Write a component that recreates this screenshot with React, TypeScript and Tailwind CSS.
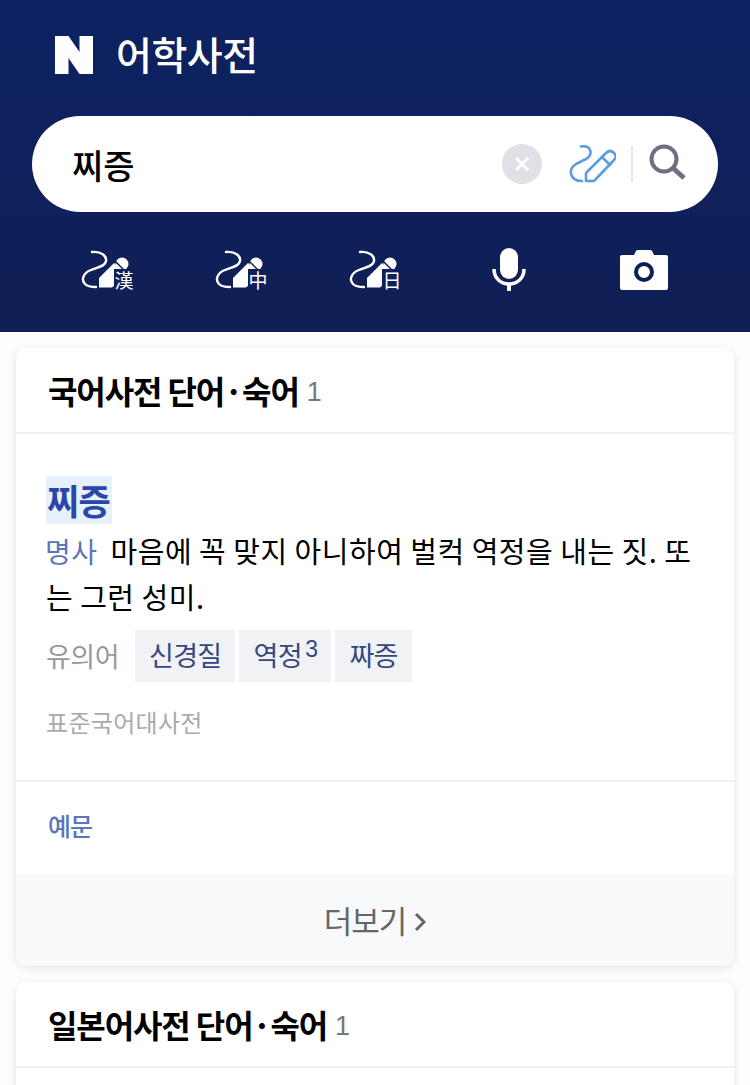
const FONT = "font-['Noto_Sans_CJK_KR','Noto_Sans',sans-serif]";

function HandwriteIcon({ label }: { label: string }) {
    return (
        <div className="relative w-[54px] h-[41px]">
            <svg width="54" height="41" viewBox="0 0 54 41" fill="none">
                <path d="M12 2 C 21 1 27 6 26 11 C 25 17 17 17 11 20 C 3 23 1 30 5 34 C 8 37 12 37 16 37" stroke="#fff" strokeWidth="2.4" strokeLinecap="round" />
                <path d="M19 37.5 V 28 L 34 13 L 46 25 L 32 37.5 Z" fill="#fff" />
                <circle cx="42" cy="14" r="6.5" fill="#fff" />
                <path d="M33.5 9.5 L 44 20" stroke="#0f1f58" strokeWidth="1.5" />
            </svg>
            <span className="absolute left-[34px] top-[19px] w-5 h-[22px] bg-[#0f1f58] text-white text-[19px] leading-[22px] text-center font-['Noto_Sans_CJK_KR',sans-serif]">
                {label}
            </span>
        </div>
    );
}

function CardHeader({ title }: { title: string }) {
    return (
        <div className="h-[86px] px-8 flex items-center border-b-2 border-[#f0f0f2]">
            <h2 className="text-[32px] font-bold text-black tracking-[-1.1px] leading-none">{title}</h2>
            <span className="ml-2 mt-1 text-[27px] text-[#777] leading-none font-['Liberation_Sans',sans-serif]">1</span>
        </div>
    );
}

export default function App() {
    return (
        <div className={`w-[750px] h-[1085px] overflow-hidden bg-[#fdfdfd] ${FONT}`}>
            {/* Search header */}
            <header className="h-[332px] px-8 bg-gradient-to-b from-[#0d2262] to-[#101f55]">
                <div className="h-[116px] pl-[23px] pb-[6px] flex items-center gap-[23px]">
                    <svg width="38" height="38" viewBox="0 0 38 38">
                        <path d="M0 0 H13.5 L24.5 16 V0 H38 V38 H24.5 L13.5 22 V38 H0 Z" fill="#fff" />
                    </svg>
                    <h1 className="mb-1 text-[39px] font-medium text-white tracking-[-0.5px] leading-none">어학사전</h1>
                </div>

                <div className="h-[96px] pl-10 pr-[32px] bg-white rounded-[48px] flex items-center">
                    <span className="flex-1 text-[34px] font-medium text-black">찌증</span>
                    <div className="w-10 h-10 rounded-full bg-[#dfe1e6] flex items-center justify-center">
                        <svg width="18" height="18" viewBox="0 0 18 18">
                            <path d="M3 3 L15 15 M15 3 L3 15" stroke="#fff" strokeWidth="3" />
                        </svg>
                    </div>
                    <svg className="ml-[26px]" width="48" height="38" viewBox="0 0 48 38" fill="none" stroke="#5f9be0" strokeWidth="2.6" strokeLinejoin="round" strokeLinecap="round">
                        <path d="M13 1.5 C 24 0 25 10 18 14 L 8 19 C 0 24 1 36 14 36" />
                        <path d="M18 36 V 28 L 38 8 C 41 5 44 6 46 8 C 48 10 48 13 46 15 L 26 36 Z" />
                        <path d="M34 12 L 42 20" />
                    </svg>
                    <div className="ml-[15px] w-0.5 h-9 bg-[#e6e7ea]" />
                    <svg className="ml-[16px] mb-1" width="37" height="36" viewBox="0 0 37 36" fill="none" stroke="#6c7080">
                        <circle cx="15" cy="15" r="12.5" strokeWidth="4" />
                        <path d="M24 24 L 35 34" strokeWidth="5" />
                    </svg>
                </div>

                <div className="h-[120px] pb-[4px] -mx-8 pl-[80px] flex items-center">
                    <HandwriteIcon label="漢" />
                    <div className="ml-[80px]"><HandwriteIcon label="中" /></div>
                    <div className="ml-[80px]"><HandwriteIcon label="日" /></div>
                    <svg className="ml-[90px]" width="34" height="44" viewBox="0 0 34 44" fill="none">
                        <rect x="8" y="0" width="18" height="31" rx="9" fill="#fff" />
                        <path d="M2 21 C 2 41 32 41 32 21" stroke="#fff" strokeWidth="3.5" />
                        <path d="M17 35 V 43" stroke="#fff" strokeWidth="4" />
                    </svg>
                    <svg className="ml-[94px]" width="48" height="40" viewBox="0 0 48 40">
                        <path d="M14 5 L 16 1 Q 16.5 0 18 0 H 30 Q 31.5 0 32 1 L 34 5 H 46 Q 48 5 48 7 V 38 Q 48 40 46 40 H 2 Q 0 40 0 38 V 7 Q 0 5 2 5 Z" fill="#fff" />
                        <circle cx="24" cy="22" r="8" fill="none" stroke="#0f1f58" strokeWidth="4" />
                    </svg>
                </div>
            </header>

            <main className="px-4 pt-4 flex flex-col gap-4">
                {/* Korean dictionary card */}
                <section className="bg-white rounded-[10px] overflow-hidden shadow-[0_2px_8px_rgba(0,0,0,0.1)]">
                    <CardHeader title="국어사전 단어·숙어" />
                    <div className="px-[30px] pt-[42px] h-[348px] border-b-2 border-[#f0f0f2]">
                        <div className="block h-12 w-[66px] pl-px bg-[#e6f1fb] text-[35px] leading-[48px] font-bold text-[#2b46a8] tracking-[-0.7px]">찌증</div>
                        <p className="text-[29px] leading-[45px] mt-[4px] tracking-[0.5px] text-black">
                            <span className="text-[28px] text-[#5a75b8] mr-[13px] -ml-px">명사</span>
                            <span>마음에 꼭 맞지 아니하여 벌컥 역정을 내는 짓. 또는 그런 성미.</span>
                        </p>
                        <div className="mt-[11px] flex items-center gap-1">
                            <span className="mr-3 text-[27px] text-[#999] tracking-[-0.5px]">유의어</span>
                            <span className="h-[52px] px-[14px] bg-[#f1f2f6] text-[27px] leading-[50px] text-[#36477f] tracking-[-0.7px]">신경질</span>
                            <span className="h-[52px] px-[14px] bg-[#f1f2f6] text-[27px] leading-[50px] text-[#36477f] tracking-[-0.5px]">
                                역정<sup className="text-[23px] font-['Liberation_Sans',sans-serif] align-baseline relative -top-[9px] ml-[3px]">3</sup>
                            </span>
                            <span className="h-[52px] px-[14px] bg-[#f1f2f6] text-[27px] leading-[50px] text-[#36477f] tracking-[-0.7px]">짜증</span>
                        </div>
                        <p className="mt-[20px] text-[24px] leading-[40px] text-[#aaa] tracking-[0.3px]">표준국어대사전</p>
                    </div>
                    <div className="h-[92px] pb-1 px-8 flex items-center">
                        <span className="text-[25px] text-[#5a75b8] font-medium tracking-[-1px]">예문</span>
                    </div>
                    <div className="h-[92px] bg-[#f8f9fb] flex items-center justify-center gap-2">
                        <span className="text-[31px] text-[#666] tracking-[-1px]">더보기</span>
                        <svg className="mt-1" width="12" height="20" viewBox="0 0 12 20" fill="none">
                            <path d="M2 2 L 10 10 L 2 18" stroke="#666" strokeWidth="3" />
                        </svg>
                    </div>
                </section>

                {/* Japanese dictionary card */}
                <section className="bg-white rounded-[10px] overflow-hidden shadow-[0_2px_8px_rgba(0,0,0,0.1)] h-[200px]">
                    <CardHeader title="일본어사전 단어·숙어" />
                </section>
            </main>
        </div>
    );
}
